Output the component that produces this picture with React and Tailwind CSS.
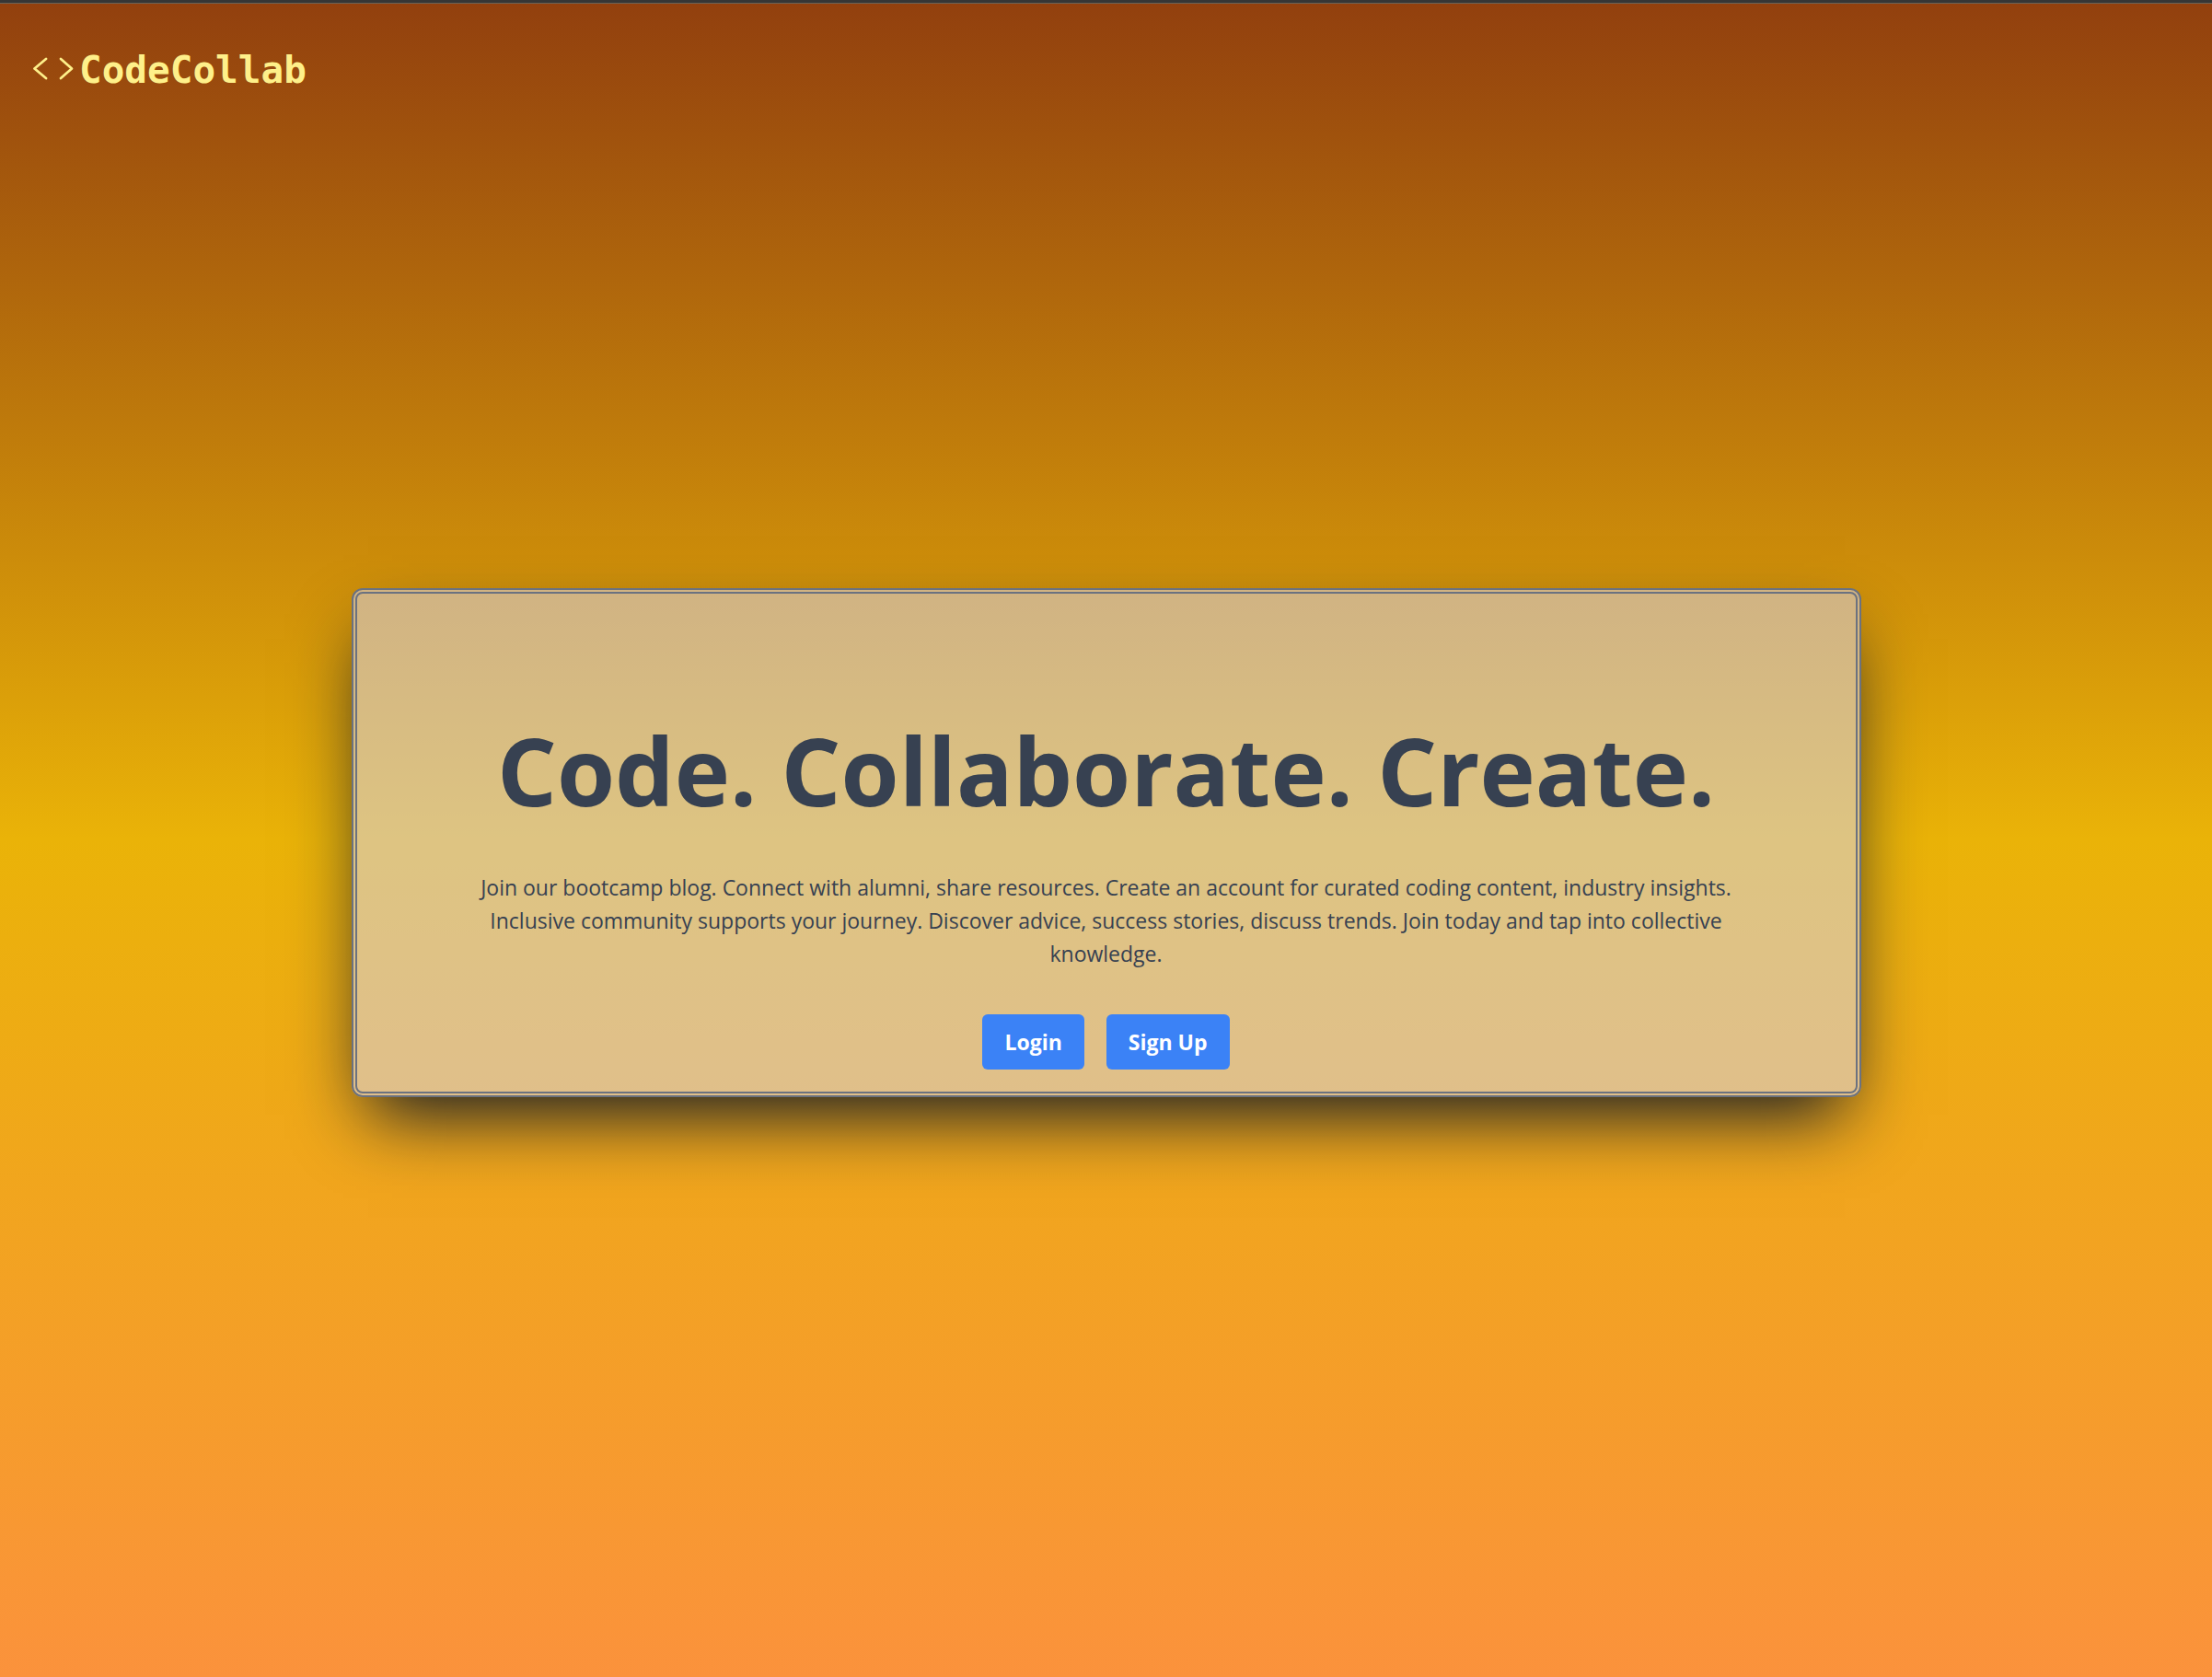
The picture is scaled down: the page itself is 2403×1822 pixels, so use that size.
const buttonClass =
  'h-[60px] rounded-md bg-[#3b82f6] px-6 text-[23px] font-bold text-white hover:bg-[#1d4ed8]';

function Logo() {
  return (
    <a href="/" className="flex items-center gap-1.5 text-[#fef08a]">
      <svg
        className="h-11 w-11"
        viewBox="0 0 44 44"
        fill="none"
        stroke="currentColor"
        strokeWidth="2.75"
        strokeLinecap="round"
        strokeLinejoin="round"
        aria-hidden="true"
      >
        <path d="M14 10 1.500 20.500 14 31" />
        <path d="M30 10 42 20.500 30 31" />
      </svg>
      <span className="font-['DejaVu_Sans_Mono','Liberation_Mono',monospace] text-[41px] leading-[60px] font-bold">
        CodeCollab
      </span>
    </a>
  );
}

export default function App() {
  return (
    <div className="flex min-h-screen flex-col border-t-[3px] border-[#363636] bg-[linear-gradient(to_bottom,#92400e,#eab308,#fb923c)] font-['Open_Sans','Noto_Sans',sans-serif]">
      <header className="border-t border-[#6b6357] px-9 pt-[42px]">
        <Logo />
      </header>
      <main className="mt-[533px] flex justify-center px-6">
        <section className="flex w-full max-w-[1640px] flex-col items-center rounded-xl border-[6px] border-double border-[#6b7280] bg-[#d2d6fc]/50 px-[120px] pt-[138px] pb-6 text-center shadow-[0_37px_75px_-18px_#111827] text-[#374151]">
          <h1 className="text-[102px] leading-[108px] font-bold">Code. Collaborate. Create.</h1>
          <p className="mt-[55px] max-w-[1380px] text-[23px] leading-9">
            Join our bootcamp blog. Connect with alumni, share resources. Create an account for
            curated coding content, industry insights. Inclusive community supports your journey.
            Discover advice, success stories, discuss trends. Join today and tap into collective
            knowledge.
          </p>
          <div className="mt-12 flex gap-6">
            <button type="button" className={buttonClass}>Login</button>
            <button type="button" className={buttonClass}>Sign Up</button>
          </div>
        </section>
      </main>
    </div>
  );
}
